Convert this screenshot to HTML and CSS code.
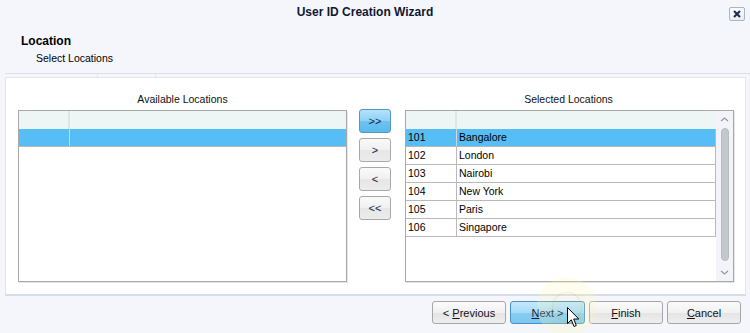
FILE: index.html
```html
<!DOCTYPE html>
<html lang="en">
<head>
    <meta charset="UTF-8">
    <title>User ID Creation Wizard</title>
    <link rel="stylesheet" href="styles.css">
</head>
<body>
    <div class="window">
        <div class="titlebar">
            <span></span>
            <div class="title">User ID Creation Wizard</div>
            <button class="close-btn">
                <svg width="8" height="8" viewBox="0 0 8 8"><path d="M1 1 L7 7 M7 1 L1 7" stroke="#1c2a4a" stroke-width="2"/></svg>
            </button>
        </div>

        <div class="page-header">
            <div class="page-title">Location</div>
            <div class="page-subtitle">Select Locations</div>
        </div>
        <div class="tab-strip"></div>

        <div class="panel">
            <div class="list-label">Available Locations</div>
            <div></div>
            <div class="list-label">Selected Locations</div>

            <div class="list">
                <div class="list-head"><span></span><span></span></div>
                <div class="list-row selected"><span></span><span></span></div>
            </div>

            <div class="move-buttons">
                <button class="move-btn active">&gt;&gt;</button>
                <button class="move-btn">&gt;</button>
                <button class="move-btn">&lt;</button>
                <button class="move-btn">&lt;&lt;</button>
            </div>

            <div class="list list-scroll">
                <div class="list-body">
                    <div class="list-head"><span></span><span></span></div>
                    <div class="list-row selected"><span>101</span><span>Bangalore</span></div>
                    <div class="list-row"><span>102</span><span>London</span></div>
                    <div class="list-row"><span>103</span><span>Nairobi</span></div>
                    <div class="list-row"><span>104</span><span>New York</span></div>
                    <div class="list-row"><span>105</span><span>Paris</span></div>
                    <div class="list-row"><span>106</span><span>Singapore</span></div>
                </div>
                <div class="scrollbar">
                    <svg class="scroll-arrow" width="9" height="5" viewBox="0 0 9 5"><path d="M1 4 L4.5 1 L8 4" fill="none" stroke="#8e9aa6" stroke-width="1.2"/></svg>
                    <div class="scroll-thumb"></div>
                    <svg class="scroll-arrow" width="9" height="5" viewBox="0 0 9 5"><path d="M1 1 L4.5 4 L8 1" fill="none" stroke="#8e9aa6" stroke-width="1.2"/></svg>
                </div>
            </div>
        </div>

        <div class="footer">
            <button class="wizard-btn">&lt; <u>P</u>revious</button>
            <button class="wizard-btn hover"><u>N</u>ext &gt;</button>
            <button class="wizard-btn"><u>F</u>inish</button>
            <button class="wizard-btn"><u>C</u>ancel</button>
        </div>

        <div class="click-halo"></div>
        <svg class="cursor" width="13" height="21" viewBox="0 0 13 21">
            <path d="M0.5 0.5 L0.5 16.5 L4.3 12.8 L7 19.5 L9.3 18.5 L6.7 12 L11.8 12 Z" fill="#fff" stroke="#000" stroke-width="1"/>
        </svg>
    </div>
</body>
</html>
```

FILE: styles.css
```css
* {
    margin: 0;
    padding: 0;
    box-sizing: border-box;
}

body {
    font-family: 'Liberation Sans', Arial, sans-serif;
    font-size: 10.5px;
    background: #f5f6fc;
    color: #000;
}

.window {
    position: relative;
    width: 750px;
    height: 333px;
    overflow: hidden;
}

.titlebar {
    display: grid;
    grid-template-columns: 1fr auto 1fr;
    height: 24px;
    align-items: center;
}

.title {
    font-weight: bold;
    font-size: 12px;
    margin-right: 20px;
    color: #101830;
}

.close-btn {
    justify-self: end;
    align-self: start;
    margin-top: 7px;
    margin-right: 5px;
    width: 16px;
    height: 14px;
    border: 1px solid #a6b6c8;
    border-radius: 2px;
    background: linear-gradient(#fbfcfe, #e9edf3);
    display: flex;
    align-items: center;
    justify-content: center;
}

.page-header {
    padding: 10px 0 8px 21px;
    margin-left: 5px;
    border-bottom: 1px solid #dcdfe7;
}

.page-header .page-title {
    margin-left: -5px;
    font-weight: bold;
    font-size: 12px;
    line-height: 14px;
}

.page-subtitle {
    margin-top: 3px;
    padding-left: 10px;
    line-height: 14px;
}

.tab-strip {
    height: 3px;
    width: 59px;
    margin-left: 97px;
    border-left: 1px solid #e2e5ec;
    border-right: 1px solid #e2e5ec;
}

.panel {
    margin: 0 4px 0 5px;
    background: #fff;
    border: 1px solid #e2e6ec;
    border-bottom: 2px solid #d5dde6;
    padding: 14px 11px 12px 12px;
    display: grid;
    grid-template-columns: 329px 32px 331px;
    column-gap: 12px;
    grid-template-rows: 14px 172px;
    row-gap: 4px;
}

.list-label {
    text-align: center;
    line-height: 14px;
    color: #111;
}

.list {
    border: 1px solid #a9a9a9;
    box-shadow: 1px 1px 0 #e6e6e6;
    background: #fff;
}

.list-head,
.list-row {
    display: grid;
    grid-template-columns: 51px 1fr;
    height: 18px;
}

.list-head {
    background: #eef5f5;
}

.list-head span:first-child {
    border-right: 2px solid #dde6e6;
}

.list-row {
    border-bottom: 1px solid #b9b9b9;
    line-height: 17px;
}

.list-row span {
    padding-left: 2px;
    white-space: nowrap;
}

.list-row span:first-child {
    border-right: 1px solid #b9b9b9;
}

.list-row.selected {
    background: #56bdf5;
}

.list-row.selected span:first-child {
    border-right-color: #c9d9e3;
}

.list-scroll {
    display: grid;
    grid-template-columns: 1fr 17px;
    margin-left: 2px;
}

.list-body .list-row {
    border-right: 1px solid #b9b9b9;
}

.scrollbar {
    background: #f2f4f9;
    display: flex;
    flex-direction: column;
    align-items: center;
}

.scroll-arrow {
    margin: 6px 0;
}

.scroll-thumb {
    flex: 1;
    width: 8px;
    margin: 0 0 3px;
    border-radius: 4px;
    background: #c3c8cc;
    border: 1px solid #b8bdc2;
}

.move-buttons {
    display: flex;
    flex-direction: column;
    gap: 5px;
    margin-top: -1px;
}

.move-btn {
    height: 24px;
    font-family: inherit;
    font-size: 11px;
    color: #1a2340;
    border: 1px solid #a8a8a8;
    border-radius: 3px;
    background: linear-gradient(#fafafa 0%, #f0f0f0 50%, #e6e6e6 51%, #ececec 100%);
}

.move-btn.active {
    border-color: #5a95c2;
    background: linear-gradient(#b4e2fa 0%, #8ed1f6 50%, #6fc3f1 51%, #5ab9ec 100%);
}

.footer {
    display: flex;
    justify-content: flex-end;
    gap: 4px;
    padding: 5px 9px 0 0;
}

.wizard-btn {
    width: 74px;
    height: 23px;
    font-family: inherit;
    font-size: 11px;
    color: #111;
    border: 1px solid #a7a7a7;
    border-radius: 3px;
    background: linear-gradient(#fbfbfb 0%, #f1f1f1 50%, #e4e4e4 51%, #eeeeee 100%);
}

.wizard-btn.hover {
    width: 75px;
    color: #0f1a40;
    border-color: #4f8fbf;
    background: linear-gradient(#c4e8fb 0%, #a6dbf8 50%, #86cdf3 51%, #7cc8f0 100%);
}

.click-halo {
    position: absolute;
    left: 537px;
    top: 277px;
    width: 60px;
    height: 60px;
    border-radius: 50%;
    background: radial-gradient(circle, rgba(255, 245, 170, 0.1) 0%, rgba(255, 240, 150, 0.14) 32%, rgba(235, 185, 110, 0.3) 34%, rgba(255, 245, 160, 0.18) 37%, rgba(255, 248, 180, 0.24) 70%, rgba(255, 250, 200, 0) 72%);
}

.cursor {
    position: absolute;
    left: 567px;
    top: 307px;
}
```
